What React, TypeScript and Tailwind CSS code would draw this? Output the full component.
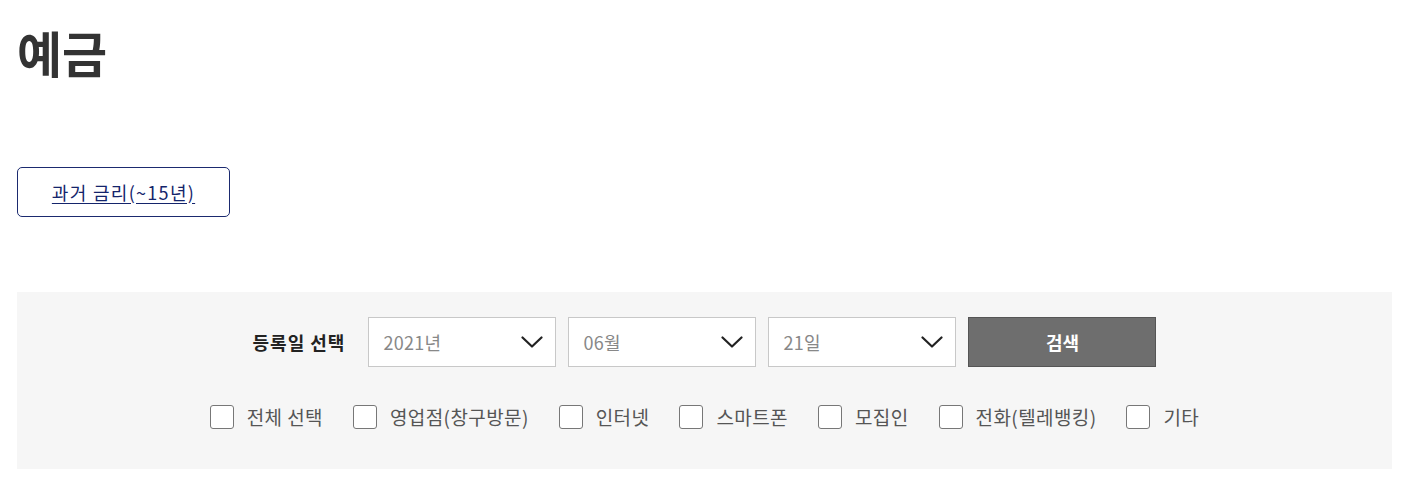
import React from "react";

const channels = ["전체 선택", "영업점(창구방문)", "인터넷", "스마트폰", "모집인", "전화(텔레뱅킹)", "기타"];

const Chevron: React.FC = () => (
  <svg width="22" height="12" viewBox="0 0 22 12" fill="none" className="shrink-0">
    <path d="M1.5 1.5 L11 10.5 L20.5 1.5" stroke="#222" strokeWidth="2.2" strokeLinecap="round" strokeLinejoin="round" />
  </svg>
);

const SelectBox: React.FC<{ value: string }> = ({ value }) => (
  <div className="w-[188px] h-[50px] bg-white border border-[#c8c8c8] flex items-center justify-between pl-[14px] pr-[12px]">
    <span className="text-[18px] text-[#888] tracking-[0.3px]">{value}</span>
    <Chevron />
  </div>
);

const App: React.FC = () => {
  return (
    <div
      className="w-[1416px] h-[484px] bg-white px-[17px] pt-[21px]"
      style={{ fontFamily: '"Noto Sans CJK KR", "Noto Sans", sans-serif' }}
    >
      <h1 className="text-[49px] font-bold text-[#333] leading-[62px]">예금</h1>

      <button className="mt-[84px] w-[213px] h-[50px] border border-[#1b2a6f] rounded-[5px] bg-white flex items-center justify-center">
        <span className="text-[18px] text-[#14246b] underline underline-offset-[3px] tracking-[1.3px]">과거 금리(~15년)</span>
      </button>

      <div className="mt-[75px] w-[1375px] h-[177px] bg-[#f6f6f6] flex flex-col items-center pt-[25px]">
        <div className="flex items-center gap-[12px]">
          <span className="text-[18px] font-bold text-[#222] mr-[11px] tracking-[1px]">등록일 선택</span>
          <SelectBox value="2021년" />
          <SelectBox value="06월" />
          <SelectBox value="21일" />
          <button className="w-[188px] h-[50px] bg-[#6e6e6e] border border-[#555] text-white text-[18px] font-bold">
            검색
          </button>
        </div>
        <div className="flex items-center gap-[30px] mt-[36px]">
          {channels.map((c) => (
            <label key={c} className="flex items-center gap-[13px]">
              <span className="w-[24px] h-[24px] bg-white border border-[#777] rounded-[3px]" />
              <span className="text-[19px] text-[#555] tracking-[0.4px]">{c}</span>
            </label>
          ))}
        </div>
      </div>
    </div>
  );
};

export default App;
